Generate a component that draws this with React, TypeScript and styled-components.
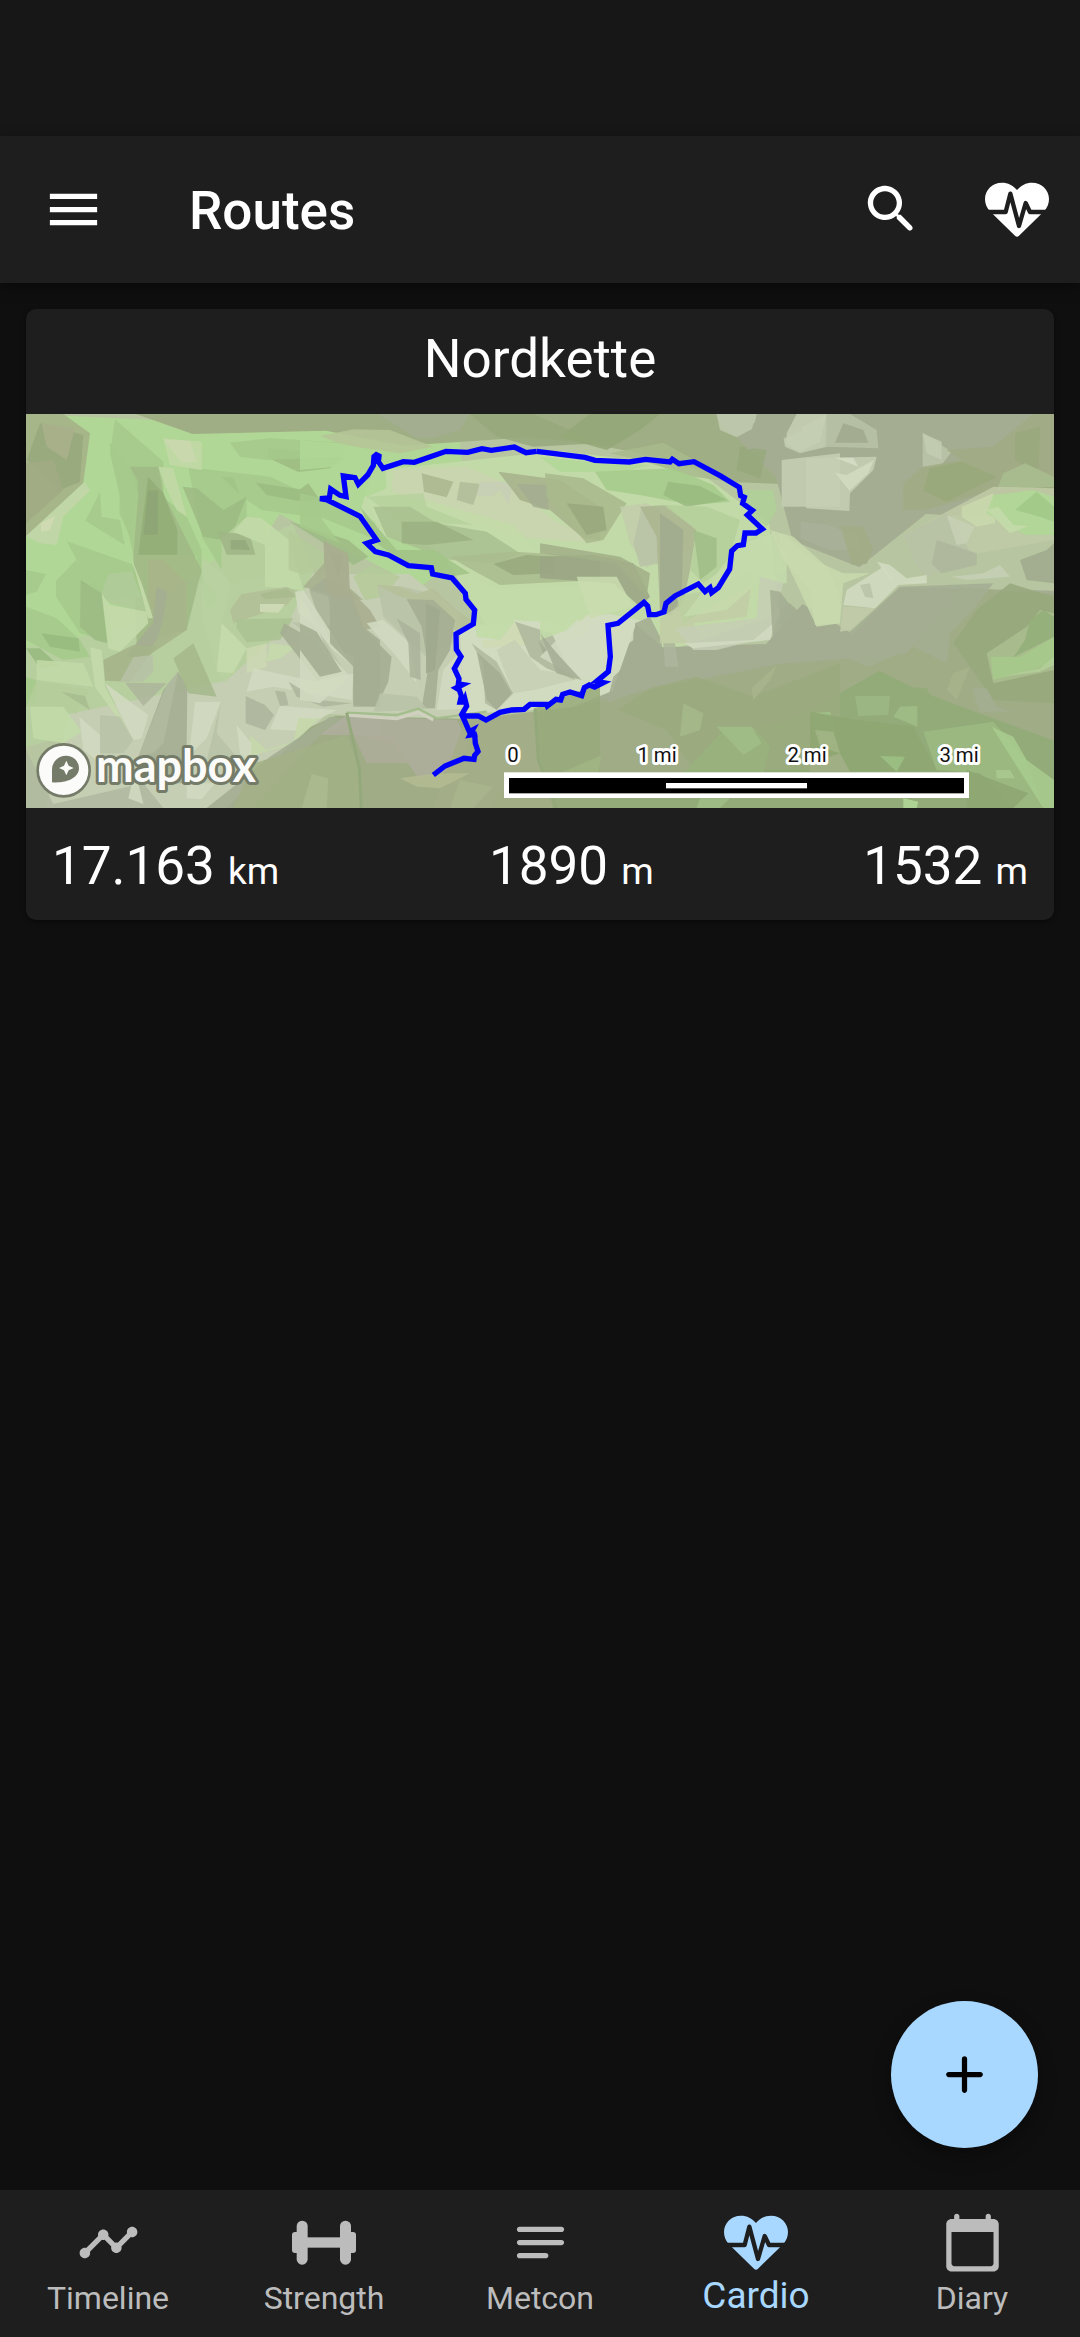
import React from "react";
import styled, { createGlobalStyle } from "styled-components";

const color = {
  page: "#0f0f0f",
  status: "#171717",
  surface: "#1e1e1e",
  text: "#ffffff",
  muted: "#bcbcbc",
  accent: "#a8d8ff",
};

const GlobalStyle = createGlobalStyle`
  *, *::before, *::after { box-sizing: border-box; }
  html, body, #root { height: 100%; }
  body {
    margin: 0;
    background: ${color.page};
    color: ${color.text};
    font-family: Roboto, "Noto Sans", sans-serif;
  }
  button { border: 0; padding: 0; background: none; color: inherit; font: inherit; cursor: pointer; }
`;

const Screen = styled.div`
  display: flex;
  flex-direction: column;
  min-height: 100%;
`;

const StatusBar = styled.div`
  height: 136px;
  flex: none;
  background: ${color.status};
`;

const AppBar = styled.header`
  display: flex;
  align-items: center;
  height: 147px;
  flex: none;
  padding-left: 10px;
  background: ${color.surface};
  box-shadow: 0 4px 14px rgba(0, 0, 0, 0.4);
`;

const IconButton = styled.button`
  display: grid;
  place-items: center;
  width: 126px;
  height: 126px;
`;

const PageTitle = styled.h1`
  flex: 1;
  margin: 0;
  padding: 2px 0 0 53px;
  font-size: 53px;
  line-height: 62px;
  font-weight: 500;
`;

const Content = styled.main`
  flex: 1;
  padding: 26px;
`;

const Card = styled.article`
  overflow: hidden;
  border-radius: 10px;
  background: ${color.surface};
  box-shadow: 0 2px 5px rgba(0, 0, 0, 0.4);
`;

const CardTitle = styled.h2`
  margin: 0;
  padding: 19px 26px 24px;
  font-size: 53px;
  line-height: 62px;
  font-weight: 400;
  text-align: center;
`;

const Stats = styled.dl`
  display: flex;
  justify-content: space-between;
  margin: 0;
  padding: 27px 26px 23px;
`;

const Stat = styled.div`
  font-size: 53px;
  line-height: 62px;
`;

const HiddenTerm = styled.dt`
  position: absolute;
  width: 1px;
  height: 1px;
  overflow: hidden;
  clip-path: inset(50%);
`;

const StatValue = styled.dd`
  margin: 0;
`;

const Unit = styled.span`
  font-size: 37px;
  line-height: 1;
`;

const Dock = styled.div`
  position: sticky;
  bottom: 0;
  flex: none;
`;

const AddButton = styled.button`
  position: absolute;
  right: 42px;
  bottom: calc(100% + 42px);
  display: grid;
  place-items: center;
  width: 147px;
  height: 147px;
  border-radius: 50%;
  && { background: ${color.accent}; color: #000; }
  box-shadow: 0 8px 18px rgba(0, 0, 0, 0.35);
`;

const TabBar = styled.nav`
  display: grid;
  grid-template-columns: repeat(5, 1fr);
  height: 147px;
  background: ${color.surface};
`;

const Tab = styled.a<{ $active?: boolean }>`
  display: flex;
  flex-direction: column;
  align-items: center;
  padding-top: 21px;
  text-decoration: none;
  color: ${(p) => (p.$active ? color.accent : color.muted)};
  font-size: ${(p) => (p.$active ? 37 : 32)}px;
  line-height: ${(p) => (p.$active ? 44 : 48)}px;
`;

const Glyph = styled.svg<{ $size?: number }>`
  display: block;
  flex: none;
  width: ${(p) => p.$size ?? 63}px;
  height: 63px;
  fill: currentColor;
`;

const MapImage = styled.svg`
  display: block;
  width: 100%;
  aspect-ratio: 1028 / 394;
  background: #b7c5a0;
`;

const MapLabel = styled.text`
  font-family: Roboto, sans-serif;
  font-size: 61px;
  text-anchor: middle;
  fill: #111;
  stroke: #fff;
  stroke-width: 18px;
  stroke-linejoin: round;
  paint-order: stroke;
`;

const Wordmark = styled.text`
  font-family: Lato, sans-serif;
  font-weight: 700;
  font-size: 135px;
  fill: #fbfbfa;
  stroke: #747b68;
  stroke-width: 18px;
  stroke-linejoin: round;
  paint-order: stroke;
`;

const MenuIcon = () => (
  <Glyph viewBox="0 0 24 24" aria-hidden="true">
    <path d="M3 18h18v-2H3v2zm0-5h18v-2H3v2zm0-7v2h18V6H3z" />
  </Glyph>
);

const SearchIcon = () => (
  <Glyph viewBox="0 0 24 24" aria-hidden="true">
    <path d="M15.5 14h-.79l-.28-.27c1.2-1.4 1.82-3.31 1.48-5.34-.47-2.78-2.79-5-5.59-5.34-4.23-.52-7.79 3.04-7.27 7.27.34 2.8 2.56 5.12 5.34 5.59 2.03.34 3.94-.28 5.34-1.48l.27.28v.79l4.25 4.25c.41.41 1.08.41 1.49 0 .41-.41.41-1.08 0-1.49L15.5 14zm-6 0C7.01 14 5 11.99 5 9.5S7.01 5 9.5 5 14 7.01 14 9.5 11.99 14 9.5 14z" />
  </Glyph>
);

const HeartIcon = () => (
  <Glyph viewBox="0 0 192 189" $size={64} aria-hidden="true">
    <g transform="translate(-33 -21)">
      <path d="M129 57C117 43 102 35 84 35 55 35 33 57 33 84c0 14 5 26 14 36l76 74q6 6 12 0l76-74c9-10 14-22 14-36 0-27-22-49-51-49-18 0-33 8-45 22Z" />
      <path
        d="M30 123H95L109 68 135 165 155 96 168 123H228"
        fill="none"
        stroke={color.surface}
        strokeWidth="13"
        strokeLinejoin="round"
      />
    </g>
  </Glyph>
);

const TimelineIcon = () => (
  <Glyph viewBox="0 0 24 24" aria-hidden="true">
    <path d="M23 8c0 1.1-.9 2-2 2-.18 0-.35-.02-.51-.07l-3.56 3.55c.05.16.07.34.07.52 0 1.1-.9 2-2 2s-2-.9-2-2c0-.18.02-.36.07-.52l-2.55-2.55c-.16.05-.34.07-.52.07s-.36-.02-.52-.07l-4.55 4.56c.05.16.07.33.07.51 0 1.1-.9 2-2 2s-2-.9-2-2 .9-2 2-2c.18 0 .35.02.51.07l4.56-4.55C8.02 9.36 8 9.18 8 9c0-1.1.9-2 2-2s2 .9 2 2c0 .18-.02.36-.07.52l2.55 2.55c.16-.05.34-.07.52-.07s.36.02.52.07l3.55-3.56C19.02 8.35 19 8.18 19 8c0-1.1.9-2 2-2s2 .9 2 2z" />
  </Glyph>
);

const DumbbellIcon = () => (
  <Glyph viewBox="0 0 192 189" $size={64} aria-hidden="true">
    <rect x="14" y="29" width="33" height="132" rx="16" />
    <rect x="144" y="29" width="33" height="132" rx="16" />
    <rect x="0" y="63" width="30" height="63" rx="9" />
    <rect x="162" y="63" width="30" height="63" rx="9" />
    <rect x="30" y="79" width="130" height="31" />
  </Glyph>
);

const NotesIcon = () => (
  <Glyph viewBox="0 0 24 24" aria-hidden="true">
    <path d="M20 11H4c-.55 0-1 .45-1 1s.45 1 1 1h16c.55 0 1-.45 1-1s-.45-1-1-1zM4 18h10c.55 0 1-.45 1-1s-.45-1-1-1H4c-.55 0-1 .45-1 1s.45 1 1 1zM20 6H4c-.55 0-1 .45-1 1s.45 1 1 1h16c.55 0 1-.45 1-1s-.45-1-1-1z" />
  </Glyph>
);

const CalendarIcon = () => (
  <Glyph viewBox="0 0 24 24" aria-hidden="true">
    <path d="M20 3h-1V2c0-.55-.45-1-1-1s-1 .45-1 1v1H7V2c0-.55-.45-1-1-1s-1 .45-1 1v1H4c-1.1 0-2 .9-2 2v16c0 1.1.9 2 2 2h16c1.1 0 2-.9 2-2V5c0-1.1-.9-2-2-2zm-1 18H5c-.55 0-1-.45-1-1V8h16v12c0 .55-.45 1-1 1z" />
  </Glyph>
);

const PlusIcon = () => (
  <Glyph viewBox="0 0 24 24" aria-hidden="true">
    <path d="M18 13h-5v5c0 .55-.45 1-1 1s-1-.45-1-1v-5H6c-.55 0-1-.45-1-1s.45-1 1-1h5V6c0-.55.45-1 1-1s1 .45 1 1v5h5c.55 0 1 .45 1 1s-.45 1-1 1z" />
  </Glyph>
);

type Patch = [fill: string, points: string];

/* Terrain shading, from the broad slopes down to single facets. */
const slopes: Patch[] = [
  ["#b0d796", "0,0 1300,60 1330,420 1180,520 760,300 600,560 560,800 330,760 0,900"],
  ["#b7cf9f", "0,700 300,640 560,440 800,330 900,560 700,860 250,930 0,1000"],
  ["#c5ceb3", "130,900 600,800 780,640 860,480 1150,480 1300,600 1320,920 900,900 640,1182 60,1182"],
  ["#c2d9a8", "1040,170 1600,110 2000,160 2230,330 2260,600 1900,720 1700,640 1420,700 1250,420 1000,300"],
  ["#d0dbbf", "1300,640 1500,620 1750,600 1850,620 1760,860 1640,880 1320,900"],
  ["#9fae84", "330,0 2460,0 2270,210 2130,205 1950,140 1700,90 1500,70 1130,95 900,50 500,60"],
  ["#a4ad92", "2060,0 3084,0 3084,320 2700,300 2500,460 2300,380 2250,190"],
  ["#a4ad92", "1830,630 1910,700 2220,690 2330,570 2480,660 2620,520 3084,530 3084,1000 1600,1000 1640,880 1760,830"],
  ["#9fac86", "600,1182 850,940 930,905 1360,915 1640,880 1800,840 2260,750 2640,720 2800,520 3084,540 3084,1182"],
  ["#93ab79", "1950,1120 2080,960 2250,930 2350,890 2560,770 2680,830 2810,880 3084,980 3084,1182 1400,1182 1420,1130"],
];

const west: Patch[] = [
  ["#a4b288", "18,12 130,12 210,70 190,218 18,380"],
  ["#99a97d", "60,40 190,75 180,215 120,240 20,150"],
  ["#a8b18b", "64,40 165,55 140,150 80,110"],
  ["#a0ab84", "18,160 100,150 130,240 18,340"],
  ["#c3d6a8", "18,378 195,215 210,242 130,320 110,405 60,400"],
  ["#d0dbb4", "62,340 105,318 90,360 64,365"],
  ["#a5c98b", "285,28 430,155 430,260 500,320 545,420 545,500 600,560 560,600 530,440 500,434 340,434 270,130"],
  ["#a1b885", "330,170 415,170 430,250 545,480 500,660 350,700 340,440 355,250"],
  ["#93ad78", "384,200 430,250 472,360 472,434 355,434"],
  ["#8da574", "384,242 414,242 414,374 370,374"],
  ["#a5c98b", "240,246 245,320 300,330 314,405 196,332"],
  ["#a5c98b", "268,98 330,170 355,215 330,380 298,310 300,250"],
  ["#a5c98b", "140,394 335,462 375,560 250,570 170,450"],
  ["#a5c98b", "108,512 168,450 260,560 280,700 180,670 108,560"],
  ["#9dbb84", "182,510 245,550 262,700 225,690 180,650"],
  ["#b0cb98", "265,492 335,484 384,610 270,580 245,550"],
  ["#c5dbab", "245,550 270,585 380,605 385,640 300,725 265,715"],
  ["#c5dbab", "332,440 365,520 400,625 384,625 350,500"],
  ["#a7b48a", "384,450 430,450 500,520 500,660 380,740 320,740 400,630 384,560"],
  ["#a4ad92", "410,530 442,545 430,625 410,690 370,742 314,742 400,640"],
  ["#a5b489", "250,750 340,705 410,710 330,815 255,812"],
  ["#b7c1a6", "340,742 398,735 400,785 370,815 300,815"],
  ["#a5c98b", "18,480 78,492 50,545 18,555"],
  ["#a5c98b", "18,590 110,625 180,690 210,740 130,750 18,690"],
  ["#97bb80", "64,670 175,685 180,725 90,710"],
  ["#97bb80", "18,715 60,715 120,770 60,775"],
  ["#a5c98b", "18,800 48,810 48,880 18,890"],
  ["#c1d9a6", "50,750 190,760 220,830 50,810"],
  ["#b4cd9a", "50,812 210,840 170,910 18,890"],
  ["#a9bd8f", "124,845 195,858 210,900"],
  ["#c1dba7", "30,890 130,890 185,965 130,1000 40,985"],
  ["#c5dbab", "210,712 245,720 255,830 340,990 225,830"],
  ["#d1dbc0", "255,820 385,915 365,985 340,990"],
  ["#adb69c", "315,818 440,820 370,888"],
  ["#b8c3a6", "240,915 300,920 340,990 310,1030 240,1030"],
  ["#d1dbc0", "178,920 240,975 240,1060 190,1020"],
  ["#a4ad92", "475,785 502,830 500,1010 500,1120 360,1120 355,1040 430,840"],
  ["#b0b99f", "440,825 475,785 430,1000 400,1030 355,1040"],
  ["#a5b88b", "460,745 520,700 590,860 505,850"],
  ["#b9d2a0", "545,440 605,490 632,520 605,640 680,715 618,812 590,780 545,620"],
  ["#a5c98b", "505,172 750,200 900,270 905,325 725,300 680,270 680,320 605,390 605,480 545,380"],
  ["#9dbb84", "488,230 530,235 610,300 680,260 645,350 605,390 550,380"],
  ["#c1d9a6", "430,85 545,95 545,180 450,165"],
  ["#c9d7ae", "430,88 510,92 530,156 485,158"],
  ["#c1d9a6", "415,170 460,175 500,320 470,300 430,215"],
  ["#a0c386", "605,200 640,203 660,255"],
  ["#9cbc82", "745,113 900,128 975,145 930,175 835,186 740,142"],
  ["#a5c98b", "630,98 750,85 990,100 960,140 740,150 660,140"],
  ["#9cbc82", "708,218 840,238 865,220 900,270 850,275 740,255"],
  ["#b5ce9b", "605,385 680,320 735,330 735,500 632,520 605,480"],
  ["#9fb585", "592,364 690,376 706,434 620,434"],
  ["#94a87b", "632,390 675,390 690,420 632,418"],
  ["#c3dba9", "680,320 725,325 806,390 850,540 735,530 735,405 640,365"],
  ["#b5cb9a", "806,360 912,430 912,470 850,495 806,480"],
  ["#9dbb84", "810,335 985,390 1045,440 1000,465 912,400"],
  ["#a7b18d", "912,392 985,430 985,530 1030,570 945,560 850,530 912,460"],
  ["#9ca582", "925,420 970,440 955,505"],
  ["#a4ad92", "868,540 912,505 945,508 1000,560 1030,650 1080,690 1080,890 1000,885 1000,740 940,715"],
  ["#aeb79c", "868,540 925,560 935,650 900,640"],
  ["#b3bf98", "665,552 800,530 835,545 800,585 640,640 630,600"],
  ["#a8ba8d", "720,552 800,535 830,560 735,568"],
  ["#d0dbb8", "720,582 795,582 775,608 720,606"],
  ["#abc192", "650,628 820,625 780,690 680,697 650,655"],
  ["#c5dbab", "605,640 680,715 640,790 590,785"],
  ["#ccd8b2", "680,715 740,700 740,770 680,790"],
  ["#c5dbab", "750,700 830,710 780,745 740,755"],
  ["#d1dbc0", "825,545 850,540 1000,770 940,720 860,625 835,610"],
  ["#a4ad92", "793,640 880,690 970,790 890,810 780,670"],
  ["#b8c3a6", "815,637 880,640 940,730 985,800 960,795 885,690"],
  ["#d1dbc0", "700,775 890,815 1000,790 995,870 760,830 680,845"],
  ["#adb69c", "765,842 795,845 806,885 780,888"],
  ["#adb69c", "806,815 895,870 995,880 910,890 830,860"],
  ["#adb69c", "677,858 735,885 762,915 735,960 677,940"],
  ["#d1dbc0", "780,888 950,900 830,962 750,958"],
  ["#c5d8aa", "835,925 900,925 830,990 740,1020 690,975 690,1040 820,1000"],
  ["#d1dbc0", "525,875 602,875 560,985 515,1030 500,1100"],
  ["#b8c3a6", "602,880 590,970 650,1040 560,1050"],
  ["#d1dbc0", "650,945 695,1000 690,1060 660,1030"],
  ["#d1dbc0", "500,1120 585,1120 545,1168 500,1165"],
  ["#b0b99f", "18,1020 100,1182 370,1120 430,1194 18,1194"],
  ["#d1dbc0", "345,1080 370,1182 325,1165"],
  ["#a4ad92", "640,1130 750,1040 930,920 1000,930 900,975 830,1050 700,1194 560,1194"],
  ["#a3b086", "700,1060 980,975 1020,1080 1030,1194 640,1194"],
  ["#acb98f", "875,1092 925,1105 920,1194 845,1194"],
  ["#aeae9d", "980,915 1080,930 1080,975 900,975"],
];

const central: Patch[] = [
  ["#a4ad92", "232,12 510,12 480,60 400,84 350,84"],
  ["#99a97d", "510,12 700,12 900,100 700,110 590,80"],
  ["#b5c596", "60,78 160,58 270,60 400,110 300,130 130,105"],
  ["#b0d796", "0,90 120,100 250,130 260,235 200,260 110,170 0,180"],
  ["#a5c98b", "0,250 90,270 180,320 230,390 60,320 120,400 0,350"],
  ["#c9d4ae", "280,180 500,170 640,230 760,330 900,400 640,380 400,290 275,245"],
  ["#aab78f", "365,190 460,215 440,262 372,245"],
  ["#b1bd98", "480,215 540,222 520,285 470,270"],
  ["#c6cfb6", "540,215 640,215 625,285 600,240 580,258 530,258"],
  ["#a6b28b", "595,185 780,210 900,290 900,390 850,385 750,300 660,270"],
  ["#a4ad92", "650,222 745,225 745,300 700,290"],
  ["#c3dba9", "200,260 380,270 640,345 720,430 500,470 380,400 240,380"],
  ["#b7d29d", "200,260 370,250 380,290 520,345 300,335"],
  ["#a9bf8f", "220,290 330,290 410,340 560,365 660,430 600,460 450,450 260,380"],
  ["#9bb181", "305,335 410,335 520,390 380,405 305,400"],
  ["#a0c486", "180,290 290,420 400,420 510,490 450,500 330,470 230,400"],
  ["#a9bc8d", "450,440 640,425 900,440 900,510 600,525 500,470"],
  ["#98a97d", "580,462 680,435 760,440 760,490 640,495"],
  ["#c1dba7", "500,500 600,535 820,535 900,560 830,640 640,640 600,690 530,680 520,600"],
  ["#cfdab4", "545,690 600,690 640,640 740,655 900,600 850,680 640,710 550,712"],
  ["#d1dbc0", "640,630 820,640 900,600 900,800 820,800 700,700"],
  ["#b5cb9a", "160,500 215,465 300,500 250,560 195,570"],
  ["#a8ad90", "70,395 145,440 150,540 210,600 240,650 190,660 80,540"],
  ["#b8c3a6", "232,525 310,530 410,555 460,620 460,700 380,740 250,620"],
  ["#b5bf98", "232,525 300,530 350,552 400,535 470,600 525,640 470,668 420,590 300,560"],
  ["#a4ad92", "320,568 400,570 465,630 450,720 415,780 405,895 365,895 385,770 365,650"],
  ["#9fa88d", "378,580 420,600 405,780 378,790"],
  ["#d1dbc0", "250,630 330,700 350,820 290,740 200,640"],
  ["#abb49a", "290,625 360,670 362,810 330,800 325,700"],
  ["#d1dbc0", "0,560 40,620 80,720 150,800 60,880 0,870"],
  ["#a4ad92", "0,640 50,665 125,785 60,800 0,720"],
  ["#a4ad92", "90,560 150,560 190,655 275,740 265,815 230,890 160,890 160,770 90,700"],
  ["#b8c3a6", "240,850 350,860 380,895 350,900 220,905"],
  ["#d1dbc0", "430,780 475,730 550,750 550,895 410,900"],
  ["#b0b99f", "515,700 590,755 640,850 590,900 555,880 550,760"],
  ["#a4ad92", "530,725 600,790 635,850 590,900 560,870"],
  ["#c6cfb4", "590,720 645,690 720,780 860,800 700,840 640,850"],
  ["#aeb79c", "645,635 755,670 825,810 740,775 690,740"],
  ["#a4ad92", "715,690 780,770 735,750"],
  ["#aeae9d", "150,920 470,930 505,1000 480,1070 360,1110 280,1000 160,975"],
  ["#aead98", "160,975 280,975 330,1060 200,1060"],
  ["#a4ad87", "495,930 700,905 715,1040 760,1194 400,1194"],
  ["#b3bb92", "300,1105 410,1090 510,1090 420,1135 350,1130"],
  ["#99ab7c", "705,895 900,820 900,1194 770,1194 715,1050"],
  ["#a9b58c", "480,1110 580,1130 520,1194 450,1194"],
];

const east: Patch[] = [
  ["#93a778", "150,12 360,12 300,60 200,120 60,80"],
  ["#a9bb8c", "210,130 370,98 500,170 600,220 460,200 300,150"],
  ["#b0d796", "0,140 180,160 330,165 250,185 60,185"],
  ["#a5c98b", "165,185 400,175 520,225 570,275 460,285 300,255 200,240"],
  ["#9abb81", "385,215 480,228 560,270 440,290 370,255"],
  ["#a9b98c", "15,190 130,205 260,280 190,390 140,400 80,330 20,260"],
  ["#99a97d", "80,280 190,290 200,360 140,375"],
  ["#c1cdaa", "240,290 320,280 460,350 450,420 360,440 320,475 270,400"],
  ["#b8c3a6", "305,290 360,300 360,460 300,470 280,400"],
  ["#abb58f", "300,290 380,285 470,360 450,480 425,600 360,610 350,380"],
  ["#a0aa8e", "360,310 430,360 425,560 390,620 360,600"],
  ["#b5cf9b", "370,285 500,290 600,330 560,470 490,520 450,480 470,360"],
  ["#a1bd87", "460,360 530,385 530,470 480,510"],
  ["#9ba584", "0,440 160,435 280,460 330,560 300,590 220,520 0,505"],
  ["#a2af87", "0,400 240,440 330,490 320,560 230,460 0,430"],
  ["#c1dba7", "0,530 150,520 175,570 110,650 0,690"],
  ["#c8dcae", "110,500 230,500 280,590 150,625"],
  ["#d1dbc0", "110,630 205,640 210,780 120,810 0,740"],
  ["#a5ae94", "0,670 60,740 125,810 50,790"],
  ["#d1dbc0", "205,660 280,650 280,690 215,740"],
  ["#a4ad92", "285,640 330,620 365,690 370,820 200,880 220,800 285,740"],
  ["#c1cda5", "360,625 430,580 640,480 620,620 460,640 490,700 360,700"],
  ["#b9cf9f", "410,560 530,535 600,400 650,380 740,480 560,560 430,640"],
  ["#c5dbab", "600,400 700,370 740,440 740,520 650,520 560,600 430,620"],
  ["#c5ceb4", "405,655 650,625 660,500 730,520 690,680 530,720 460,720"],
  ["#d1dbc0", "430,700 640,690 700,640 700,560 720,610 690,690 460,715"],
  ["#b1d097", "600,240 700,240 710,300 680,350 640,320"],
  ["#97a87d", "600,110 680,120 660,205 590,180"],
  ["#bfc9ae", "530,12 650,12 640,55 590,82 540,60"],
  ["#c3cdb2", "730,80 860,12 860,110 780,130 735,110"],
  ["#a4ad92", "640,40 760,12 790,60 700,100 620,120"],
  ["#c5ceb3", "725,150 900,130 900,290 725,290"],
  ["#c8d9ad", "690,360 760,380 860,470 900,560 900,640 830,650 760,500"],
  ["#a4ad92", "690,540 720,545 830,690 790,720 700,720"],
  ["#adb69c", "370,700 405,700 415,770 375,770"],
  ["#9bab7e", "235,900 330,835 470,800 640,860 900,760 900,1080 460,1080 380,960"],
  ["#a9b58c", "635,835 710,765 690,810 640,870"],
  ["#a5b88a", "430,880 490,910 480,960 420,980"],
  ["#98b27d", "430,1090 560,950 640,950 690,1010 670,1090"],
  ["#a1bd87", "530,950 635,950 665,1000 610,1035"],
  ["#a0b484", "60,1090 185,1035 175,1090"],
  ["#9fc087", "810,910 870,905 900,1000 850,1010"],
  ["#a0bd86", "480,1165 570,1165 540,1194 470,1194"],
];

const farEast: Patch[] = [
  ["#c5ceb3", "20,70 50,12 140,12 120,95 60,125 20,105"],
  ["#b7c1a6", "140,12 210,12 290,60 295,115 135,110"],
  ["#a0aa8e", "190,40 250,60 265,98 165,98"],
  ["#c5ceb3", "78,145 290,140 280,180 210,250 208,303 78,295"],
  ["#d5dec5", "165,143 220,143 235,170"],
  ["#d1dbc0", "165,188 200,195 282,150 265,190 208,242"],
  ["#a9b298", "62,335 145,345 235,380 240,420 150,420 62,385"],
  ["#a2ad86", "182,348 250,350 280,420 260,462 215,465"],
  ["#b9c4a8", "428,68 515,125 480,170 428,170"],
  ["#c3ccb1", "428,70 485,95 485,150 440,130"],
  ["#a0ab83", "370,300 370,220 430,170 545,150 500,120 640,110 760,12 822,12 822,250 640,240 510,280 430,300"],
  ["#97a87a", "450,175 545,155 650,200 500,275 430,240"],
  ["#99a97d", "705,70 780,50 775,190 705,150"],
  ["#a9bd8f", "670,190 735,160 822,200 822,230 650,240"],
  ["#bfcaa5", "370,375 640,230 822,235 822,390 600,430 440,500 400,440"],
  ["#b7c1a6", "370,375 500,310 580,440 440,500 410,470"],
  ["#adb69c", "470,390 590,430 590,465 485,490 455,462"],
  ["#c6cfb4", "500,315 585,350 560,400 530,405"],
  ["#c9d8ad", "545,290 640,250 645,340 590,350 545,320"],
  ["#b0d796", "640,255 760,240 822,260 822,375 735,375 620,310"],
  ["#c3dba9", "620,300 655,290 700,345 745,348 690,370"],
  ["#a0c886", "705,300 770,245 822,290 822,335 780,320"],
  ["#a0ab8d", "720,450 800,420 822,400 822,520 740,510"],
  ["#c8d9ad", "0,370 100,450 190,490 270,490 190,520 180,640 105,645 90,540 40,480 0,440"],
  ["#d1dbc0", "200,540 310,470 345,520 440,510 440,520 355,525 285,595 190,585"],
  ["#c1cba9", "190,590 285,595 210,660 180,665"],
  ["#b9c3a7", "240,525 270,520 280,565 255,560"],
  ["#d1dbc0", "290,455 330,465 380,505 440,495 440,518 340,520"],
  ["#c6cfb4", "515,500 610,490 660,465 690,500 560,510"],
  ["#a4ad92", "0,600 30,580 95,640 110,690 210,665 360,530 640,520 580,600 510,670 500,760 400,710 270,770 150,730 0,760"],
  ["#99a97d", "590,600 690,520 822,560 822,880 640,870 520,700"],
  ["#aabd8f", "620,730 740,650 780,600 822,610 822,780 640,820"],
  ["#a5c98b", "632,740 720,740 822,680 822,760 700,795 640,810"],
  ["#93ae79", "735,690 750,630 790,600 822,620 822,680 700,742"],
  ["#b3ce99", "660,800 780,775 822,740 822,765 780,785"],
  ["#a7b38b", "570,770 530,870 500,840 520,790"],
  ["#a4ad92", "575,835 620,835 650,890 700,905 600,905"],
  ["#93ab79", "225,860 380,830 440,835 480,910 540,910 540,960 430,960 235,925"],
  ["#9cb684", "225,858 330,858 325,915 235,918"],
  ["#9fbd86", "360,890 412,888 412,950 340,920"],
  ["#8ea672", "90,905 230,930 400,950 470,1080 90,1085"],
  ["#9bb981", "430,965 640,935 740,1050 790,1194 700,1194 600,1090 470,1080"],
  ["#a7cb8e", "635,950 700,980 740,1050 822,1110 822,1194 790,1194 730,1100"],
  ["#8ea672", "560,1080 640,1110 745,1150 700,1194 560,1194"],
  ["#9cc083", "300,1038 375,1040 350,1085"],
  ["#a9c890", "648,1080 690,1080 705,1105 650,1105"],
  ["#a0b584", "105,960 160,965 180,1030 120,1010"],
  ["#a3b088", "90,1060 180,1030 210,1085 90,1085"],
  ["#b0d796", "370,1165 415,1175 410,1194 370,1194"],
];

const terrain: { x: number; y: number; patches: Patch[] }[] = [
  { x: 0, y: 0, patches: slopes },
  { x: -18, y: -12, patches: west },
  { x: 822, y: -12, patches: central },
  { x: 1542, y: -12, patches: east },
  { x: 2262, y: -12, patches: farEast },
];

const trackWest =
  "400,1095 435,1068 492,1045 522,1048 524,1036 534,1024 526,1000 524,975 530,972 510,975 518,960 508,965 495,935 485,914 500,888 495,868 492,876 480,876 484,858 478,840 468,834 488,824 475,822 477,806 463,776 483,740 469,718 468,672 520,642 524,600 498,568 496,550 456,504 398,492 394,473 325,467 265,435 226,425 200,400 230,390 180,319 82,270 60,266 88,264 92,237 120,256 138,260 130,198 165,203 175,223 203,195 220,166 222,140 229,134 237,138 235,155 249,175 310,155 343,157 438,124 503,127 546,116 574,121 643,111 678,128 710,124";
const trackEast =
  "-10,124 135,142 165,151 268,156 317,148 390,156 397,148 417,161 462,155 540,197 598,232 602,257 613,262 608,280 637,301 622,315 667,357 648,369 615,369 610,404 592,407 575,423 569,477 535,533 515,548 510,533 495,545 475,522 405,558 378,580 372,606 348,614 328,614 323,588 312,577 234,640 204,646 211,740 205,785 170,814 190,818 164,831 148,825 133,833 125,857 90,846 68,853 62,870 48,868 22,888 20,883 -30,883 -48,898 -85,900 -120,907 -162,930 -185,918 -232,918";

const scaleLabels = [
  { x: 1461, text: "0" },
  { x: 1893, text: "1 mi" },
  { x: 2343, text: "2 mi" },
  { x: 2799, text: "3 mi" },
];

const RouteMap = () => (
  <MapImage viewBox="0 0 3084 1182" preserveAspectRatio="xMidYMid slice" role="img" aria-label="Nordkette route map">
    {terrain.map((sheet, i) => (
      <g key={i} transform={`translate(${sheet.x} ${sheet.y})`}>
        {sheet.patches.map(([fill, points], j) => (
          <polygon key={j} points={points} fill={fill} opacity={i === 0 ? 1 : 0.88} />
        ))}
      </g>
    ))}
    <g transform="translate(822 -12)" fill="none" strokeWidth="9">
      <path d="M140 908L290 915 355 896 410 925 560 905" stroke="#a3bd8c" strokeWidth="7" />
      <path d="M145 916L290 926 355 907 400 930" stroke="#d0d0bf" />
      <path d="M140 908L178 1075 184 1194M705 895L715 1050 770 1194" stroke="#94a97b" />
    </g>
    <g fill="none" stroke="#0000ff" strokeWidth="16">
      <polyline transform="translate(822 -12)" points={trackWest} />
      <polyline transform="translate(1542 -12)" points={trackEast} />
    </g>
    <g transform="translate(-18 -12)">
      <circle cx="131" cy="1081" r="78" fill="#fbfbfa" stroke="#747b68" strokeWidth="8" />
      <path d="M96 1117V1079A42 42 0 0 1 138 1037 38 38 0 0 1 177 1075C177 1103 140 1121 96 1117Z" fill="#747b68" />
      <path d="M139 1052L146 1067 161 1074 146 1081 139 1096 132 1081 117 1074 132 1067Z" fill="#fbfbfa" />
      <Wordmark x="228" y="1115">mapbox</Wordmark>
    </g>
    <rect x="1434" y="1075" width="1395" height="77" fill="#fff" />
    <rect x="1449" y="1092" width="1365" height="46" />
    <rect x="1920" y="1107" width="423" height="16" fill="#fff" />
    {scaleLabels.map((label) => (
      <MapLabel key={label.text} x={label.x} y="1044">
        {label.text}
      </MapLabel>
    ))}
  </MapImage>
);

const stats = [
  { term: "Distance", value: "17.163", unit: "km" },
  { term: "Ascent", value: "1890", unit: "m" },
  { term: "Descent", value: "1532", unit: "m" },
];

const tabs = [
  { label: "Timeline", Icon: TimelineIcon },
  { label: "Strength", Icon: DumbbellIcon },
  { label: "Metcon", Icon: NotesIcon },
  { label: "Cardio", Icon: HeartIcon, active: true },
  { label: "Diary", Icon: CalendarIcon },
];

export default function App() {
  return (
    <>
      <GlobalStyle />
      <Screen>
        <StatusBar />
        <AppBar>
          <IconButton aria-label="Open menu">
            <MenuIcon />
          </IconButton>
          <PageTitle>Routes</PageTitle>
          <IconButton aria-label="Search">
            <SearchIcon />
          </IconButton>
          <IconButton aria-label="Start cardio">
            <HeartIcon />
          </IconButton>
        </AppBar>
        <Content>
          <Card>
            <CardTitle>Nordkette</CardTitle>
            <RouteMap />
            <Stats>
              {stats.map((s) => (
                <Stat key={s.term}>
                  <HiddenTerm aria-label={s.term} />
                  <StatValue>
                    {s.value} <Unit>{s.unit}</Unit>
                  </StatValue>
                </Stat>
              ))}
            </Stats>
          </Card>
        </Content>
        <Dock>
          <AddButton aria-label="Add route">
            <PlusIcon />
          </AddButton>
          <TabBar>
            {tabs.map(({ label, Icon, active }) => (
              <Tab key={label} href={`#${label.toLowerCase()}`} $active={active} aria-current={active ? "page" : undefined}>
                <Icon />
                {label}
              </Tab>
            ))}
          </TabBar>
        </Dock>
      </Screen>
    </>
  );
}
